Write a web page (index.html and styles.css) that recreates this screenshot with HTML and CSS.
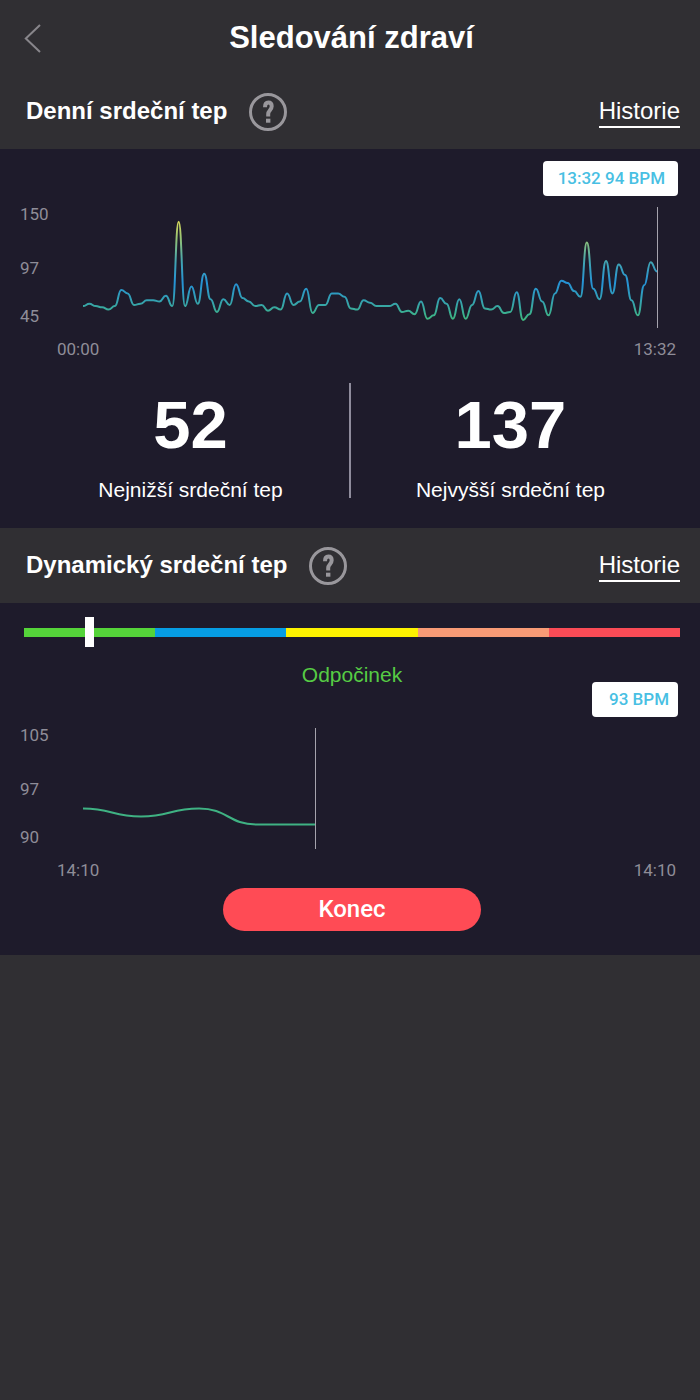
FILE: index.html
```html
<!DOCTYPE html>
<html lang="cs">
<head>
  <meta charset="UTF-8" />
  <meta name="viewport" content="width=device-width, initial-scale=1" />
  <title>Sledování zdraví</title>
  <link rel="stylesheet" href="styles.css">
</head>
<body>
  <header class="topbar">
    <button class="back" aria-label="Zpět">
      <svg width="18" height="30" viewBox="0 0 18 30"><path d="M16 2 L1.800 15.500 L16 29" /></svg>
    </button>
    <h1>Sledování zdraví</h1>
  </header>

  <main>
    <div class="section-head">
      <h2>Denní srdeční tep</h2>
      <button class="help" aria-label="Nápověda">
        <svg width="38" height="38" viewBox="0 0 38 38">
          <circle cx="19" cy="19" r="17.500" />
          <path d="M16 14.200 C16 11 17.300 9.600 19.300 9.600 C21.300 9.600 22.700 11 22.700 13.300 C22.700 17 19.200 17.400 19.200 21 V23.600" />
          <rect x="17" y="25.700" width="4.400" height="4" />
        </svg>
      </button>
      <a class="history" href="#">Historie</a>
    </div>
    <section class="panel panel-daily">
      <div class="badge">13:32 94 BPM</div>
      <div class="chart">
        <div class="axis-y"><span>150</span><span>97</span><span>45</span></div>
        <svg class="plot" viewBox="0 0 595 121" preserveAspectRatio="none">
          <defs>
            <linearGradient id="heat" gradientUnits="userSpaceOnUse" x1="0" y1="14" x2="0" y2="114">
              <stop offset="0" stop-color="#d8d95a" />
              <stop offset="0.200" stop-color="#8cc07a" />
              <stop offset="0.420" stop-color="#3fa3b4" />
              <stop offset="0.620" stop-color="#2592d6" />
              <stop offset="0.820" stop-color="#36a3ab" />
              <stop offset="1" stop-color="#3fb97c" />
            </linearGradient>
          </defs>
          <path class="line" id="daily" stroke="url(#heat)" />
          <path class="cursor" d="M574.500 0 V121" />
        </svg>
      </div>
      <div class="axis-x"><span>00:00</span><span>13:32</span></div>
      <div class="stats">
        <div class="stat">
          <strong>52</strong>
          <span>Nejnižší srdeční tep</span>
        </div>
        <div class="stat">
          <strong>137</strong>
          <span>Nejvyšší srdeční tep</span>
        </div>
      </div>
    </section>

    <div class="section-head">
      <h2>Dynamický srdeční tep</h2>
      <button class="help" aria-label="Nápověda">
        <svg width="38" height="38" viewBox="0 0 38 38">
          <circle cx="19" cy="19" r="17.500" />
          <path d="M16 14.200 C16 11 17.300 9.600 19.300 9.600 C21.300 9.600 22.700 11 22.700 13.300 C22.700 17 19.200 17.400 19.200 21 V23.600" />
          <rect x="17" y="25.700" width="4.400" height="4" />
        </svg>
      </button>
      <a class="history" href="#">Historie</a>
    </div>
    <section class="panel panel-live">
      <div class="zones">
        <span class="zone rest"></span>
        <span class="zone warmup"></span>
        <span class="zone burn"></span>
        <span class="zone aerobic"></span>
        <span class="zone limit"></span>
        <span class="marker" style="left: 10%"></span>
      </div>
      <p class="zone-name">Odpočinek</p>
      <div class="badge badge-live">93 BPM</div>
      <div class="chart">
        <div class="axis-y"><span>105</span><span>97</span><span>90</span></div>
        <svg class="plot" viewBox="0 0 595 121" preserveAspectRatio="none">
          <path class="line" id="live" stroke="#3fb283" />
          <path class="cursor" d="M232.500 0 V121" />
        </svg>
      </div>
      <div class="axis-x"><span>14:10</span><span>14:10</span></div>
      <div class="actions">
        <button class="stop">Konec</button>
      </div>
    </section>
  </main>

  <script src="charts.js"></script>
</body>
</html>
```
FILE: styles.css
```css
* {
  box-sizing: border-box;
}
body {
  margin: 0;
  background-color: #302f33;
  color: #fff;
  font-family: "Liberation Sans", Arial, sans-serif;
}
h1, h2, p {
  margin: 0;
}
button {
  border: none;
  padding: 0;
  background: none;
  cursor: pointer;
}
svg {
  display: block;
  fill: none;
}

.topbar {
  display: grid;
  grid-template-columns: 44px 1fr 44px;
  align-items: center;
  height: 74px;
  padding: 2px 21px 0 24px;
}
.topbar h1 {
  font-size: 31px;
  line-height: 36px;
  text-align: center;
}
.back path {
  stroke: #88868b;
  stroke-width: 2;
}

.section-head {
  display: flex;
  align-items: center;
  height: 75px;
  padding: 0 20px 0 26px;
}
.section-head h2 {
  padding-bottom: 2px;
  font-size: 24px;
  line-height: 28px;
}
.help {
  margin-left: 22px;
}
.help circle {
  stroke: #99979c;
  stroke-width: 3;
}
.help path {
  stroke: #99979c;
  stroke-width: 4;
}
.help rect {
  fill: #99979c;
}
.history {
  margin-left: auto;
  border-bottom: 2px solid #fff;
  color: #fff;
  font-size: 24px;
  line-height: 30px;
  text-decoration: none;
}

.panel {
  display: flex;
  flex-direction: column;
  background-color: #1e1b2b;
}
.panel-daily {
  padding: 12px 0 30px;
}
.panel-live {
  padding: 14px 0 24px;
}

.badge {
  align-self: flex-end;
  margin-right: 22px;
  padding: 0 13px 0 15px;
  border-radius: 4px;
  background-color: #fff;
  color: #48bfe3;
  font: 500 17px/35px Roboto, sans-serif;
}
.badge-live {
  margin-top: -5px;
  padding: 0 9px 0 17px;
}

.chart {
  display: grid;
  grid-template-columns: 63px 1fr;
  margin-top: 11px;
  padding: 0 22px 0 20px;
}
.axis-y {
  display: grid;
  grid-template-rows: 54px 48px 1fr;
  color: #8f8d98;
  font: 17px/14px Roboto, sans-serif;
}
.plot {
  width: 100%;
  height: 121px;
}
.line {
  stroke-width: 2;
  vector-effect: non-scaling-stroke;
}
.cursor {
  stroke: #a5a3ad;
  vector-effect: non-scaling-stroke;
}
.axis-x {
  display: flex;
  justify-content: space-between;
  margin-top: 11px;
  padding: 0 24px 0 57px;
  color: #8f8d98;
  font: 17px/20px Roboto, sans-serif;
}

.stats {
  display: grid;
  grid-template-columns: 1fr 1fr;
  margin-top: 24px;
  padding: 0 30px 0 28px;
}
.stat {
  display: flex;
  flex-direction: column;
  align-items: center;
  height: 115px;
}
.stat:first-child {
  padding-left: 4px;
}
.stat + .stat {
  border-left: 2px solid #8f8c9c;
}
.stat strong {
  font-size: 67px;
  line-height: 84px;
}
.stat span {
  margin-top: 11px;
  font-size: 21px;
  line-height: 24px;
}

.zones {
  position: relative;
  display: flex;
  align-items: center;
  height: 30px;
  margin: 0 20px 0 24px;
}
.zone {
  flex: 1;
  height: 9px;
}
.rest {
  background-color: #55d43a;
}
.warmup {
  background-color: #069de4;
}
.burn {
  background-color: #fdf200;
}
.aerobic {
  background-color: #f89b76;
}
.limit {
  background-color: #fa4b56;
}
.marker {
  position: absolute;
  width: 9px;
  height: 30px;
  margin-left: -5px;
  background-color: #fff;
}
.zone-name {
  margin-top: 16px;
  padding: 0 20px 0 24px;
  color: #56cc44;
  font-size: 21px;
  line-height: 24px;
  text-align: center;
}

.actions {
  margin-top: 8px;
  padding: 0 20px 0 24px;
  text-align: center;
}
.stop {
  width: 258px;
  height: 43px;
  border-radius: 22px;
  background-color: #ff4b55;
  color: #fff;
  font: 500 24px/43px Roboto, sans-serif;
  vertical-align: top;
}
```
FILE: charts.js
```js
const daily = [
  64, 66, 64, 63, 61, 64, 78, 75, 65, 66, 69, 69, 68, 73, 64, 137,
  64, 81, 66, 92, 70, 59, 70, 65, 83, 71, 68, 64, 65, 60, 63, 61,
  75, 65, 68, 79, 58, 65, 65, 75, 75, 72, 62, 61, 69, 67, 64, 64,
  64, 66, 59, 60, 57, 68, 53, 56, 71, 66, 53, 70, 53, 65, 77, 62,
  61, 64, 58, 59, 76, 52, 57, 79, 68, 56, 75, 86, 84, 77, 72, 119,
  79, 70, 103, 75, 100, 91, 69, 56, 82, 102, 94
];
const live = [95, 94, 95, 93, 93];

// low = value drawn at lowY, scale = pixels per beat
function drawLine(id, values, width, low, lowY, scale) {
  const step = width / (values.length - 1);
  const y = (v) => lowY - (v - low) * scale;
  let d = `M0 ${y(values[0])}`;

  for (let i = 1; i < values.length; i++) {
    const x = i * step;
    const mid = x - step / 2;
    d += ` C${mid} ${y(values[i - 1])} ${mid} ${y(values[i])} ${x} ${y(values[i])}`;
  }

  document.getElementById(id).setAttribute('d', d);
}

drawLine('daily', daily, 574, 52, 113, 1.157);
drawLine('live', live, 232, 93, 96.5, 8);
```
